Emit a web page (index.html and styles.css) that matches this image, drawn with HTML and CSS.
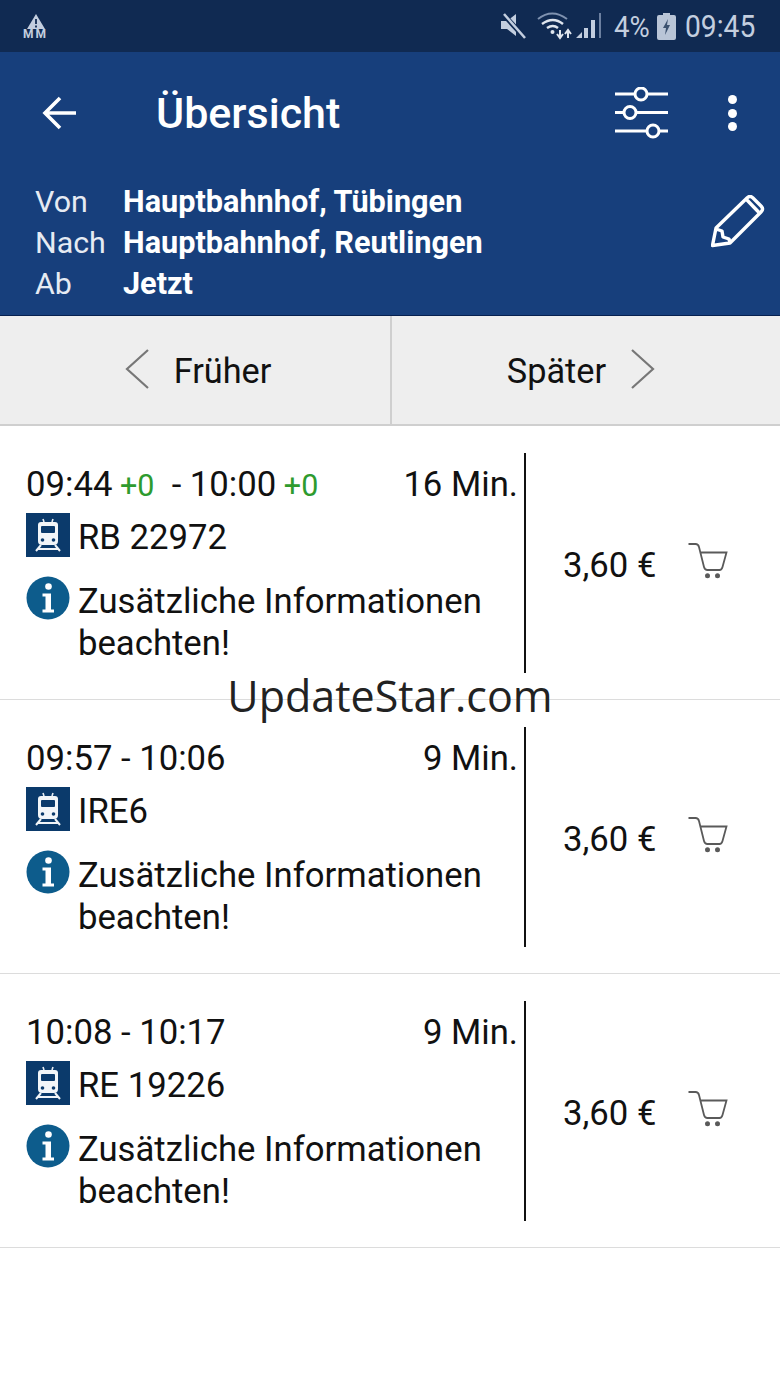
FILE: index.html
```html
<!DOCTYPE html>
<html lang="de">
<head>
<meta charset="utf-8">
<title>Übersicht</title>
<link rel="stylesheet" href="styles.css">
</head>
<body>
<svg class="defs" width="0" height="0" aria-hidden="true">
  <symbol id="train" viewBox="0 0 44 44">
    <rect width="44" height="44" fill="#0b3a6b"/>
    <path d="M18 9l-1-3M26 9l1-3" stroke="#e8edf3" stroke-width="1.600" fill="none"/>
    <path d="M15 9h14a3 3 0 0 1 3 3v16a4 4 0 0 1-4 4H16a4 4 0 0 1-4-4V12a3 3 0 0 1 3-3z" fill="#f2f5f8"/>
    <rect x="15" y="13" width="14" height="7" rx="1" fill="#0b3a6b"/>
    <circle cx="16.500" cy="27" r="1.800" fill="#0b3a6b"/><circle cx="27.500" cy="27" r="1.800" fill="#0b3a6b"/>
    <path d="M15 32l-5 6M29 32l5 6M12 36h20" stroke="#f2f5f8" stroke-width="2" fill="none"/>
  </symbol>
  <symbol id="info" viewBox="0 0 44 44">
    <circle cx="22" cy="22" r="21.500" fill="#0d5c8c"/>
    <circle cx="22.500" cy="10.500" r="3.300" fill="#fff"/>
    <path d="M16.500 17.500h8.500v16h3v3h-11.500v-3h3v-13h-3z" fill="#fff"/>
  </symbol>
  <symbol id="cart" viewBox="0 0 40 36">
    <path d="M.5 1h7c2 0 3 1 3.500 3l5 20c.5 2 1.500 3 3.500 3h12c1.500 0 2.500-1 3-3l4-14.500H12" fill="none" stroke="#5a5a5a" stroke-width="1.800"/>
    <circle cx="19.500" cy="32.700" r="2.500" fill="#5a5a5a"/><circle cx="29.500" cy="32.700" r="2.500" fill="#5a5a5a"/>
  </symbol>
</svg>

<div class="status">
  <div class="mm">
    <svg width="24" height="15" viewBox="0 0 24 15"><path d="M12 0l9 15H3z" fill="#c3cedf"/><path d="M12 5v5M12 11.500v2" stroke="#102a52" stroke-width="1.800"/></svg>
    <span class="mm-text">MM</span>
  </div>
  <div class="status-right">
    <svg class="st-mute" width="26" height="26" viewBox="0 0 26 26"><path d="M0 8h6l9-7v22l-9-7H0z" fill="#c3cedf"/><path d="M2 1l22 24" stroke="#102a52" stroke-width="5"/><path d="M3 1l21 24" stroke="#c3cedf" stroke-width="2.500"/></svg>
    <svg class="st-wifi" width="66" height="28" viewBox="0 0 66 28"><path d="M1 7q14-11 29 0" fill="none" stroke="#7f92b0" stroke-width="2"/><path d="M5 12q11-8 21 0M10 16q6-4 11 0" fill="none" stroke="#dfe5ee" stroke-width="2.500"/><circle cx="15.500" cy="20" r="2" fill="#dfe5ee"/><path d="M23 18v7M20 22l3 4 3-4M31 26v-8M28 22l3-4 3 4" fill="none" stroke="#dfe5ee" stroke-width="2"/><path d="M39 26l6-6v6zM47 26v-10h4v10zM54 26V8h4v18z" fill="#c3cedf"/><path d="M62 26V1h2v25z" fill="#6c80a0"/></svg>
    <span class="st-pct">4%</span>
    <svg class="st-batt" width="19" height="27" viewBox="0 0 19 27"><path d="M6 0h7v2h4a2 2 0 0 1 2 2v21a2 2 0 0 1-2 2H2a2 2 0 0 1-2-2V4a2 2 0 0 1 2-2h4z" fill="#b9c5d7"/><path d="M11 6l-5 9h3l-1 7 5-10h-3z" fill="#3b516f"/></svg>
    <span class="st-time">09:45</span>
  </div>
</div>

<header class="head">
  <div class="bar">
    <svg class="back" width="36" height="36" viewBox="0 0 36 36"><path d="M34 18H3M18 3L3 18l15 15" fill="none" stroke="#fff" stroke-width="3.600"/></svg>
    <h1 class="title">Übersicht</h1>
    <svg class="sliders" width="53" height="52" viewBox="0 0 53 52"><g fill="none" stroke="#fff" stroke-width="3"><path d="M0 7h20M32 7h21M0 25.500h9M21 25.500h32M0 44h32M44 44h9"/><circle cx="26" cy="7" r="6"/><circle cx="15" cy="25.500" r="6"/><circle cx="38" cy="44" r="6"/></g></svg>
    <div class="dots"><i></i><i></i><i></i></div>
  </div>
  <div class="route">
    <dl class="route-list">
      <div class="route-row"><dt>Von</dt><dd>Hauptbahnhof, Tübingen</dd></div>
      <div class="route-row"><dt>Nach</dt><dd>Hauptbahnhof, Reutlingen</dd></div>
      <div class="route-row"><dt>Ab</dt><dd>Jetzt</dd></div>
    </dl>
    <svg class="edit" width="54" height="54" viewBox="0 0 54 54"><path d="M1.500 50.500L5 33 36 3q3-3 6 0l8 8q3 3 0 6L19 48zM36 5l11.500 12M5 34l6 2 1 6 6 2 1 4" fill="none" stroke="#fff" stroke-width="3.400" stroke-linejoin="round"/></svg>
  </div>
</header>

<nav class="pager">
  <div class="page-btn earlier">
    <svg width="24" height="40" viewBox="0 0 24 40"><path d="M23 1L2 20l21 19" fill="none" stroke="#777" stroke-width="2.200"/></svg>
    <span>Früher</span>
  </div>
  <div class="page-btn later">
    <span>Später</span>
    <svg width="24" height="40" viewBox="0 0 24 40"><path d="M1 1l21 19L1 39" fill="none" stroke="#777" stroke-width="2.200"/></svg>
  </div>
</nav>

<main class="list">
  <article class="conn">
    <div class="info">
      <div class="times"><span>09:44 <em>+0</em>&nbsp; - 10:00 <em>+0</em></span><span>16 Min.</span></div>
      <div class="line"><svg class="ic"><use href="#train"/></svg><span>RB 22972</span></div>
      <div class="note"><svg class="ic"><use href="#info"/></svg><span>Zusätzliche Informationen beachten!</span></div>
    </div>
    <div class="buy"><span class="price">3,60 €</span><svg class="cart"><use href="#cart"/></svg></div>
  </article>
  <article class="conn">
    <div class="info">
      <div class="times"><span>09:57 - 10:06</span><span>9 Min.</span></div>
      <div class="line"><svg class="ic"><use href="#train"/></svg><span>IRE6</span></div>
      <div class="note"><svg class="ic"><use href="#info"/></svg><span>Zusätzliche Informationen beachten!</span></div>
    </div>
    <div class="buy"><span class="price">3,60 €</span><svg class="cart"><use href="#cart"/></svg></div>
  </article>
  <article class="conn">
    <div class="info">
      <div class="times"><span>10:08 - 10:17</span><span>9 Min.</span></div>
      <div class="line"><svg class="ic"><use href="#train"/></svg><span>RE 19226</span></div>
      <div class="note"><svg class="ic"><use href="#info"/></svg><span>Zusätzliche Informationen beachten!</span></div>
    </div>
    <div class="buy"><span class="price">3,60 €</span><svg class="cart"><use href="#cart"/></svg></div>
  </article>
</main>

<div class="watermark">UpdateStar.com</div>
</body>
</html>
```
FILE: styles.css
```css
* { box-sizing: border-box; }
html, body { margin: 0; padding: 0; }
body {
  position: relative;
  width: 780px;
  height: 1386px;
  overflow: hidden;
  background: #fff;
  color: #111;
  font-family: Roboto, "Liberation Sans", sans-serif;
  font-size: 34.700px;
}
.defs { position: absolute; }

.status {
  height: 52px;
  background: #102a52;
  display: flex;
  align-items: center;
  justify-content: space-between;
  padding: 0 25px 0 23px;
  color: #c3cedf;
}
.mm { display: flex; flex-direction: column; align-items: center; width: 25px; margin-top: 2px; }
.mm-text { font-size: 12px; font-weight: 700; letter-spacing: 2px; line-height: 11px; white-space: nowrap; }
.status-right { display: flex; align-items: center; }
.st-mute { margin-right: 10px; }
.st-wifi { margin-right: 11px; }
.st-pct { width: 34px; margin-right: 9px; font-size: 30px; white-space: nowrap; transform: scaleX(.92); transform-origin: left center; }
.st-batt { margin-right: 9px; }
.st-time { width: 70px; font-size: 31px; white-space: nowrap; transform: scaleX(.91); transform-origin: left center; }

.head {
  height: 264px;
  background: #173f7c;
  border-bottom: 1px solid #06204f;
  color: #fff;
}
.bar { height: 122px; display: flex; align-items: center; padding: 0 40px 0 42px; }
.back { flex: none; }
.title { margin: 0 0 0 78px; flex: 1; font-size: 43px; font-weight: 500; }
.sliders { margin-right: 60px; }
.dots { display: flex; flex-direction: column; gap: 4.500px; margin-right: 3px; }
.dots i { display: block; width: 9px; height: 9px; border-radius: 50%; background: #fff; }

.route { display: flex; justify-content: space-between; padding: 7px 15px 0 35px; }
.route-list { margin: 0; }
.route-row { display: flex; height: 41px; line-height: 41px; font-size: 30.400px; }
.route-row dt { width: 88px; color: #e6ebf3; }
.route-row dd { margin: 0; font-size: 30.650px; font-weight: 700; }
.edit { margin-top: 14px; }

.pager { display: flex; height: 110px; background: #eee; border-bottom: 2px solid #cfcfcf; }
.page-btn { width: 50%; display: flex; align-items: center; justify-content: center; padding-top: 2px; font-size: 34.300px; }
.page-btn svg { margin-bottom: 4px; }
.earlier { gap: 25px; padding-left: 6px; }
.later { gap: 25px; padding-right: 10px; border-left: 2px solid #cfcfcf; }

.list { display: flex; flex-direction: column; }
.conn {
  height: 274px;
  padding: 27px 0 26px 26px;
  display: flex;
  border-bottom: 1px solid #dcdcdc;
}
.info { width: 500px; flex: none; padding-right: 6px; border-right: 2px solid #111; }
.times { display: flex; justify-content: space-between; height: 60px; line-height: 62px; white-space: pre; }
.times em { margin-left: -1px; font-style: normal; color: #2e9b2e; font-size: 30.500px; }
.line { display: flex; align-items: flex-start; gap: 8px; height: 63px; line-height: 48px; }
.ic { width: 44px; height: 44px; flex: none; }
.note { display: flex; align-items: flex-start; gap: 8px; line-height: 42px; padding-right: 20px; }
.note span { display: block; padding-top: 4px; }
.buy { flex: 1; display: flex; align-items: center; padding-left: 37px; }
.price { width: 125px; padding-top: 4px; }
.cart { width: 40px; height: 36px; margin-bottom: 5px; }

.watermark {
  position: absolute;
  left: 0;
  right: 0;
  top: 666px;
  text-align: center;
  font-family: "Open Sans", sans-serif;
  font-size: 43px;
  line-height: 60px;
  color: #222;
}
```
